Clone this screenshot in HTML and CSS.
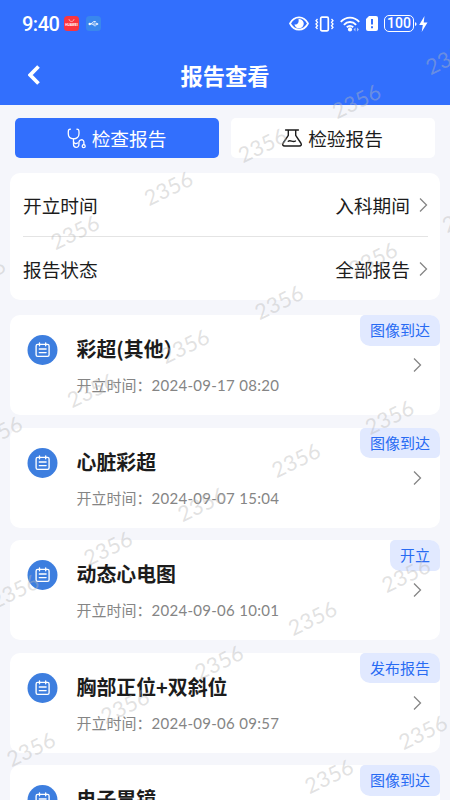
FILE: index.html
```html
<!DOCTYPE html>
<html lang="zh-CN">
<head>
<meta charset="utf-8">
<meta name="viewport" content="width=device-width, initial-scale=1">
<title>报告查看</title>
<link rel="stylesheet" href="styles.css">
</head>
<body>
<svg class="defs" width="0" height="0">
  <symbol id="chevron" viewBox="0 0 9 16"><path d="M1 1.500 7.500 8 1 14.500" fill="none" stroke="currentColor" stroke-width="1.300"/></symbol>
  <symbol id="report" viewBox="0 0 30 30">
    <circle cx="15" cy="15" r="15" fill="#3d7edf"/>
    <g fill="none" stroke="#fff" stroke-width="1.350" stroke-linecap="round" stroke-linejoin="round">
      <rect x="8.600" y="9.300" width="13" height="12" rx="1.600"/>
      <path d="M12 7.900v2.800M18.200 7.900v2.800M11.800 14h6.800M11.800 17.600h6.800"/>
    </g>
  </symbol>
</svg>
<div class="screen">
  <header class="top">
    <div class="status">
      <div class="status-left">
        <span class="clock">9:40</span>
        <svg class="app" viewBox="0 0 15 15"><rect width="15" height="15" rx="3.500" fill="#fb353e"/><path d="M5 3.200c.3 3 4.700 3 5 0" fill="none" stroke="#ffc8c8" stroke-width=".8"/><text x="7.500" y="10.100" class="brand">HUAWEI</text></svg>
        <svg class="app" viewBox="0 0 15 15"><rect width="15" height="15" rx="3.500" fill="#3987ed"/><g fill="none" stroke="#fff" stroke-width=".8"><path d="M3 8h8M5 8l2-2.200h2M6.500 8l1.800 1.800h1.500"/></g><circle cx="3.700" cy="8" r="1.200" fill="#fff"/><path d="M10.400 6.500 12.600 8l-2.200 1.500z" fill="#fff"/><circle cx="9" cy="5.800" r=".8" fill="#fff"/></svg>
      </div>
      <div class="status-right">
        <svg class="eye" viewBox="0 0 20 15"><path d="M1 7.500C5.200-.7 14.800-.7 19 7.500 14.800 15.700 5.200 15.700 1 7.500z" fill="none" stroke="#fff" stroke-width="1.700"/><path d="M9.500 3a4.700 4.700 0 1 1-4.100 5.300c2 .8 5-.8 4.100-5.300z" fill="#fff"/></svg>
        <svg class="vibrate" viewBox="0 0 19 16"><rect x="5.700" y="1.200" width="7.600" height="13.600" rx="1.200" fill="none" stroke="#fff" stroke-width="1.700"/><path d="M2.500 3 1 4.700l1.500 1.600L1 8l1.500 1.700L1 11.300 2.500 13M16.500 3 18 4.700l-1.500 1.600L18 8l-1.500 1.700 1.500 1.600-1.500 1.700" fill="none" stroke="#fff" stroke-width="1.300"/></svg>
        <svg class="wifi" viewBox="0 0 20 16"><g fill="none" stroke="#fff" stroke-width="1.900"><path d="M.8 5.800c5.200-5.600 13.200-5.600 18.400 0M3.900 8.800c3.500-3.700 8.700-3.700 12.200 0M6.800 11.300c1.800-1.700 4.600-1.700 6.400 0"/></g><circle cx="10" cy="13.400" r="2.100" fill="#fff"/><path d="m15.500 11.500-2 2 2 2zM17 11.500l2 2-2 2z" fill="#a9c4ff"/></svg>
        <svg class="sim" viewBox="0 0 12 15"><path d="M3 0h7a2 2 0 0 1 2 2v11a2 2 0 0 1-2 2H2a2 2 0 0 1-2-2V3z" fill="#fff"/><path d="M6 3v5.500M6 10.300v2" stroke="#326ffd" stroke-width="2"/></svg>
        <div class="battery">100</div>
        <svg class="bolt" viewBox="0 0 13 16"><path d="M0 6.200c2 0 2 3.600 0 3.600zM9.500 0 4.200 9h3.600L6.700 16 12.500 6.500H8.700z" fill="#fff"/></svg>
      </div>
    </div>
    <div class="nav">
      <svg class="back" viewBox="0 0 12 20"><path d="M10.500 1.500 2.200 10l8.300 8.500" fill="none" stroke="#fff" stroke-width="3.700"/></svg>
      <h1>报告查看</h1>
    </div>
  </header>
  <nav class="tabs">
    <div class="tab active">
      <svg class="steth" viewBox="0 0 19 21"><g fill="none" stroke="currentColor" stroke-width="1.300" stroke-linecap="round"><path d="M3.400 1.200C1.700 1.200 1.300 2.200 1.300 4v1.800c0 3 2 5 5.200 5s5.500-2 5.500-5V4c0-1.800-.4-2.800-2.100-2.800"/><path d="M6.500 10.900v5.300c0 4.200 5.400 4.200 5.400.2v-1.900c0-3.600 5-3.600 5-.2v2.200"/><path d="M6.500 13.500c0 1.700 2.500 2.700 4 1.500"/><circle cx="16.700" cy="18.200" r="1.500"/></g></svg>
      <span>检查报告</span>
    </div>
    <div class="tab">
      <svg class="flask" viewBox="0 0 20 18"><g fill="none" stroke="currentColor" stroke-width="1.400" stroke-linecap="round" stroke-linejoin="round"><path d="M3.600 1h12.800M6.300 1v5.300L1.200 14c-1 1.700-.5 3 1.500 3h14.600c2 0 2.500-1.300 1.500-3l-5.100-7.700V1M6.300 12.200c2.200-1.700 4.300 1.500 7.200-.2"/></g></svg>
      <span>检验报告</span>
    </div>
  </nav>
  <section class="filters">
    <div class="filter"><span class="label">开立时间</span><span class="label value">入科期间</span><svg class="arrow"><use href="#chevron"/></svg></div>
    <div class="filter"><span class="label">报告状态</span><span class="label value">全部报告</span><svg class="arrow"><use href="#chevron"/></svg></div>
  </section>
  <main class="list">
    <article class="card"><svg class="icon"><use href="#report"/></svg><div class="info"><h2>彩超(其他）</h2><p>开立时间：<span class="date">2024-09-17 08:20</span></p></div><svg class="arrow"><use href="#chevron"/></svg><span class="badge">图像到达</span></article>
    <article class="card"><svg class="icon"><use href="#report"/></svg><div class="info"><h2>心脏彩超</h2><p>开立时间：<span class="date">2024-09-07 15:04</span></p></div><svg class="arrow"><use href="#chevron"/></svg><span class="badge">图像到达</span></article>
    <article class="card"><svg class="icon"><use href="#report"/></svg><div class="info"><h2>动态心电图</h2><p>开立时间：<span class="date">2024-09-06 10:01</span></p></div><svg class="arrow"><use href="#chevron"/></svg><span class="badge">开立</span></article>
    <article class="card"><svg class="icon"><use href="#report"/></svg><div class="info"><h2>胸部正位+双斜位</h2><p>开立时间：<span class="date">2024-09-06 09:57</span></p></div><svg class="arrow"><use href="#chevron"/></svg><span class="badge">发布报告</span></article>
    <article class="card"><svg class="icon"><use href="#report"/></svg><div class="info"><h2>电子胃镜</h2></div><svg class="arrow"><use href="#chevron"/></svg><span class="badge">图像到达</span></article>
  </main>
  <svg class="watermark" viewBox="0 0 450 800" aria-hidden="true">
    <text transform="translate(450 57) rotate(-26)">2356</text>
    <text transform="translate(356.500 101) rotate(-26)">2356</text>
    <text transform="translate(262.500 145) rotate(-26)">2356</text>
    <text transform="translate(168.500 188) rotate(-26)">2356</text>
    <text transform="translate(75 232) rotate(-26)">2356</text>
    <text transform="translate(-19 275) rotate(-26)">2356</text>
    <text transform="translate(466.500 215) rotate(-26)">2356</text>
    <text transform="translate(373 259) rotate(-26)">2356</text>
    <text transform="translate(279 302) rotate(-26)">2356</text>
    <text transform="translate(185 346) rotate(-26)">2356</text>
    <text transform="translate(91.500 390) rotate(-26)">2356</text>
    <text transform="translate(-2 433) rotate(-26)">2356</text>
    <text transform="translate(389.500 417) rotate(-26)">2356</text>
    <text transform="translate(296 460) rotate(-26)">2356</text>
    <text transform="translate(202 504) rotate(-26)">2356</text>
    <text transform="translate(108 548) rotate(-26)">2356</text>
    <text transform="translate(14.500 591) rotate(-26)">2356</text>
    <text transform="translate(406 575) rotate(-26)">2356</text>
    <text transform="translate(312.500 618) rotate(-26)">2356</text>
    <text transform="translate(219 662) rotate(-26)">2356</text>
    <text transform="translate(125 706) rotate(-26)">2356</text>
    <text transform="translate(31 749) rotate(-26)">2356</text>
    <text transform="translate(423 732) rotate(-26)">2356</text>
    <text transform="translate(329 776) rotate(-26)">2356</text>
  </svg>
</div>
</body>
</html>
```
FILE: styles.css
```css
* { box-sizing: border-box; margin: 0; padding: 0; }
body { background: #f5f6fb; color: #1c1c1c; font-family: "Noto Sans CJK SC", sans-serif; overflow: hidden; }
.defs { position: absolute; }
svg { display: block; flex: none; }
.screen { position: relative; width: 450px; height: 800px; overflow: hidden; }
.top { height: 105px; background: #326ffd; color: #fff; }
.status { height: 47px; padding: 0 22px; display: flex; justify-content: space-between; align-items: center; }
.status-left, .status-right { display: flex; align-items: center; }
.clock { width: 36px; margin-right: 6px; font: 500 20px/24px Roboto, sans-serif; letter-spacing: -.5px; white-space: nowrap; }
.app { width: 15px; height: 15px; margin-right: 7px; }
.brand { font: 700 3.2px "Liberation Sans", sans-serif; fill: #fff; text-anchor: middle; }
.eye { width: 20px; height: 15px; }
.vibrate { width: 19px; height: 16px; margin-left: 6px; }
.wifi { width: 20px; height: 16px; margin-left: 6px; }
.sim { width: 12px; height: 15px; margin-left: 6px; }
.battery { width: 30px; height: 17px; margin-left: 6px; border: 1.5px solid #fff; border-radius: 5px; font: 500 14px/15px Roboto, sans-serif; text-align: center; }
.bolt { width: 13px; height: 16px; margin-left: 1px; }
.nav { height: 56px; display: grid; grid-template-columns: 50px 1fr 50px; align-items: center; }
.back { width: 12px; height: 20px; margin-left: 28px; }
h1 { margin-top: -1px; font-size: 22.3px; line-height: 32px; font-weight: 700; text-align: center; }
.tabs { display: grid; grid-template-columns: 204px 204px; gap: 12px; padding: 13px 15px 0; }
.tab { height: 40px; padding-right: 1px; display: flex; justify-content: center; align-items: center; gap: 6px; border-radius: 5px; background: #fff; font-size: 18.7px; line-height: 40px; }
.tab.active { background: #326ffd; color: #fff; }
.steth { width: 19px; height: 21px; }
.flask { width: 20px; height: 18px; }
.filters { height: 127px; margin: 15px 10px 0; padding: 0 12px 0 13px; border-radius: 10px; background: #fff; }
.filter { height: 63px; display: flex; align-items: center; font-size: 18.7px; }
.filter + .filter { height: 64px; border-top: 1px solid #e4e4e4; }
.label { padding-bottom: 1px; }
.value { margin-left: auto; }
.arrow { width: 9px; height: 16px; color: #858585; }
.filter .arrow { margin-left: 9px; }
.list { display: grid; gap: 12.5px; margin: 15px 10px 0; }
.card { position: relative; height: 100px; padding: 20px 18px 0 17px; display: flex; align-items: flex-start; border-radius: 10px; background: #fff; }
.icon { width: 31px; height: 30px; }
.info { margin-left: 18.5px; flex: 1; }
h2 { font-size: 19.9px; line-height: 28px; font-weight: 700; }
p { margin-top: 10px; font-size: 15px; line-height: 24px; color: #858585; white-space: nowrap; }
.date { font-family: Lato, sans-serif; letter-spacing: .28px; }
.card .arrow { margin-top: 22px; }
.badge { position: absolute; top: 0; right: 0; height: 30.5px; padding: 0 10px; border-radius: 5px 10px 5px 10px; background: #e1e9ff; color: #286bf3; font-size: 15px; line-height: 30px; }
.watermark { position: absolute; inset: 0; width: 450px; height: 800px; pointer-events: none; }
.watermark text { font: 400 21.5px Lato, sans-serif; letter-spacing: .3px; text-anchor: middle; dominant-baseline: central; fill: rgba(185, 185, 185, .42); }
```
